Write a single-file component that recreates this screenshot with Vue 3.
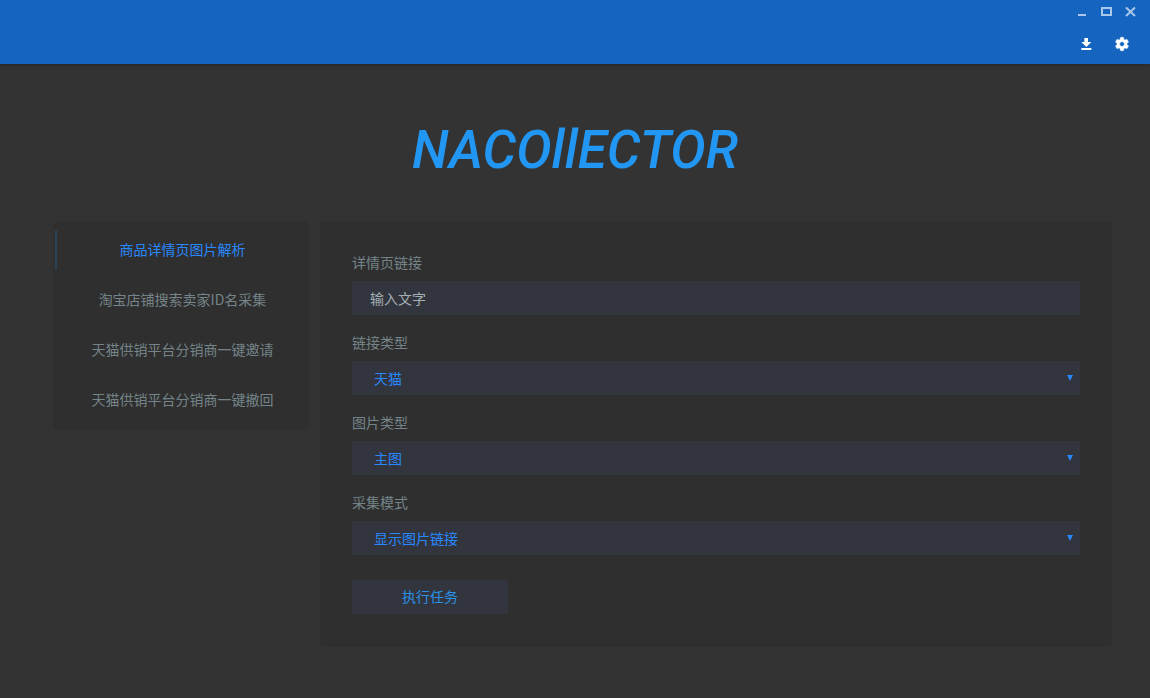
<script setup>
import { ref } from 'vue'

const tasks = [
  '商品详情页图片解析',
  '淘宝店铺搜索卖家ID名采集',
  '天猫供销平台分销商一键邀请',
  '天猫供销平台分销商一键撤回'
]
const activeTask = ref(0)

const link = ref('')
const selects = ref([
  { id: 'link-type', label: '链接类型', value: '天猫', options: ['天猫', '淘宝'] },
  { id: 'image-type', label: '图片类型', value: '主图', options: ['主图', '详情图'] },
  { id: 'mode', label: '采集模式', value: '显示图片链接', options: ['显示图片链接', '下载图片'] }
])
</script>

<template>
  <div class="app">
    <header class="bar">
      <div class="window-controls">
        <button type="button" aria-label="最小化">
          <svg width="12" height="12" viewBox="0 0 12 12"><path d="M2 8h8v2H2z" fill="currentColor" /></svg>
        </button>
        <button type="button" aria-label="最大化">
          <svg width="12" height="12" viewBox="0 0 12 12"><path d="M1 1h11v9H1zM3 3v5h7V3z" fill="currentColor" fill-rule="evenodd" /></svg>
        </button>
        <button type="button" aria-label="关闭">
          <svg width="12" height="12" viewBox="0 0 12 12"><path d="M2 1.500l9 8.500M11 1.500l-9 8.500" fill="none" stroke="currentColor" stroke-width="2" /></svg>
        </button>
      </div>
      <div class="actions">
        <button type="button" aria-label="下载">
          <svg width="16" height="16" viewBox="0 0 24 24"><path d="M20 9h-5V3H9.500v6H5l7.500 7.500zM5 18v3h15v-3H5z" fill="currentColor" /></svg>
        </button>
        <button type="button" aria-label="设置">
          <svg width="16" height="16" viewBox="0 0 24 24"><path d="M19.43 12.98c.04-.32.07-.64.07-.98s-.03-.66-.07-.98l2.11-1.65c.19-.15.24-.42.12-.64l-2-3.46c-.12-.22-.39-.3-.61-.22l-2.49 1c-.52-.4-1.08-.73-1.69-.98l-.38-2.65C14.46 2.18 14.25 2 14 2h-4c-.25 0-.46.18-.49.42l-.38 2.65c-.61.25-1.17.59-1.69.98l-2.49-1c-.23-.09-.49 0-.61.22l-2 3.46c-.13.22-.07.49.12.64l2.11 1.65c-.04.32-.07.65-.07.98s.03.66.07.98l-2.11 1.65c-.19.15-.24.42-.12.64l2 3.46c.12.22.39.3.61.22l2.49-1c.52.4 1.08.73 1.69.98l.38 2.65c.03.24.24.42.49.42h4c.25 0 .46-.18.49-.42l.38-2.65c.61-.25 1.17-.59 1.69-.98l2.49 1c.23.09.49 0 .61-.22l2-3.46c.12-.22.07-.49-.12-.64l-2.11-1.65zM12 15.500c-1.93 0-3.500-1.570-3.500-3.500s1.570-3.500 3.500-3.500 3.500 1.570 3.500 3.500-1.570 3.500-3.500 3.500z" fill="currentColor" stroke="currentColor" stroke-width=".6" /></svg>
        </button>
      </div>
    </header>

    <h1 class="logo">NACOllECTOR</h1>

    <main class="content">
      <nav class="card tasks">
        <button
          v-for="(task, i) in tasks"
          :key="task"
          type="button"
          class="task"
          :class="{ active: i === activeTask }"
          @click="activeTask = i"
        >{{ task }}</button>
      </nav>

      <form class="card form" @submit.prevent>
        <div class="field">
          <label for="link">详情页链接</label>
          <input id="link" v-model="link" class="control" type="text" placeholder="输入文字" />
        </div>
        <div v-for="s in selects" :key="s.id" class="field">
          <label :for="s.id">{{ s.label }}</label>
          <div class="select-wrap">
            <select :id="s.id" v-model="s.value" class="control">
              <option v-for="o in s.options" :key="o">{{ o }}</option>
            </select>
            <svg class="arrow" width="6" height="6" viewBox="0 0 6 6"><path d="M0 0h6L3 6z" fill="currentColor" /></svg>
          </div>
        </div>
        <button type="submit" class="submit">执行任务</button>
      </form>
    </main>
  </div>
</template>

<style>
body {
  background: #333333;
}
</style>

<style scoped>
.app {
  min-height: 100vh;
  background: #333333;
  color: #748489;
  font: 14px/20px "Noto Sans CJK SC", sans-serif;
}
.app * {
  box-sizing: border-box;
}
button,
input,
select {
  margin: 0;
  border: 0;
  border-radius: 0;
  font: inherit;
  color: inherit;
  background: none;
}
button {
  padding: 0;
  cursor: pointer;
}
.bar {
  height: 64px;
  background: #1565c0;
  color: #ffffff;
  box-shadow: 0 1px 3px rgba(0, 0, 0, 0.3);
}
.window-controls,
.actions {
  display: flex;
  justify-content: flex-end;
}
.window-controls {
  height: 24px;
  padding-right: 8px;
  color: #a9c7e9;
}
.actions {
  height: 40px;
  padding-right: 10px;
}
.window-controls button,
.actions button {
  display: flex;
  align-items: center;
  justify-content: center;
}
.window-controls button {
  width: 24px;
}
.actions button {
  width: 36px;
}
.logo {
  margin: 54px 0 0;
  color: #2196f3;
  font: italic 500 53px/64px Roboto, sans-serif;
  text-align: center;
}
.content {
  display: grid;
  grid-template-columns: 254px 1fr;
  align-items: start;
  gap: 13px;
  padding: 40px 39px 53px 54px;
}
.card {
  border-radius: 3px;
  background: #2f2f2f;
  box-shadow: 0 1px 3px rgba(0, 0, 0, 0.15);
}
.tasks {
  display: flex;
  flex-direction: column;
  gap: 10px;
  padding: 8px 0 8px 1px;
}
.task {
  height: 40px;
  padding-bottom: 2px;
  border-left: 2px solid transparent;
}
.task.active {
  border-left-color: #294459;
  color: #2888ff;
}
.form {
  padding: 31px;
}
.field {
  margin-bottom: 18px;
}
.field label {
  display: block;
  margin-bottom: 10px;
  line-height: 18px;
}
.control {
  display: block;
  width: 100%;
  height: 34px;
  padding: 0 18px;
  background: #32353d;
  outline: 0;
}
.control::placeholder {
  color: #a4afb4;
  opacity: 1;
}
.select-wrap {
  position: relative;
  color: #2888ff;
}
select.control {
  appearance: none;
  padding: 0 22px;
}
.arrow {
  position: absolute;
  top: 14px;
  right: 7px;
  pointer-events: none;
}
.submit {
  display: block;
  width: 156px;
  height: 34px;
  margin-top: 25px;
  padding-bottom: 2px;
  background: #32353d;
  color: #2b90e6;
}
</style>
